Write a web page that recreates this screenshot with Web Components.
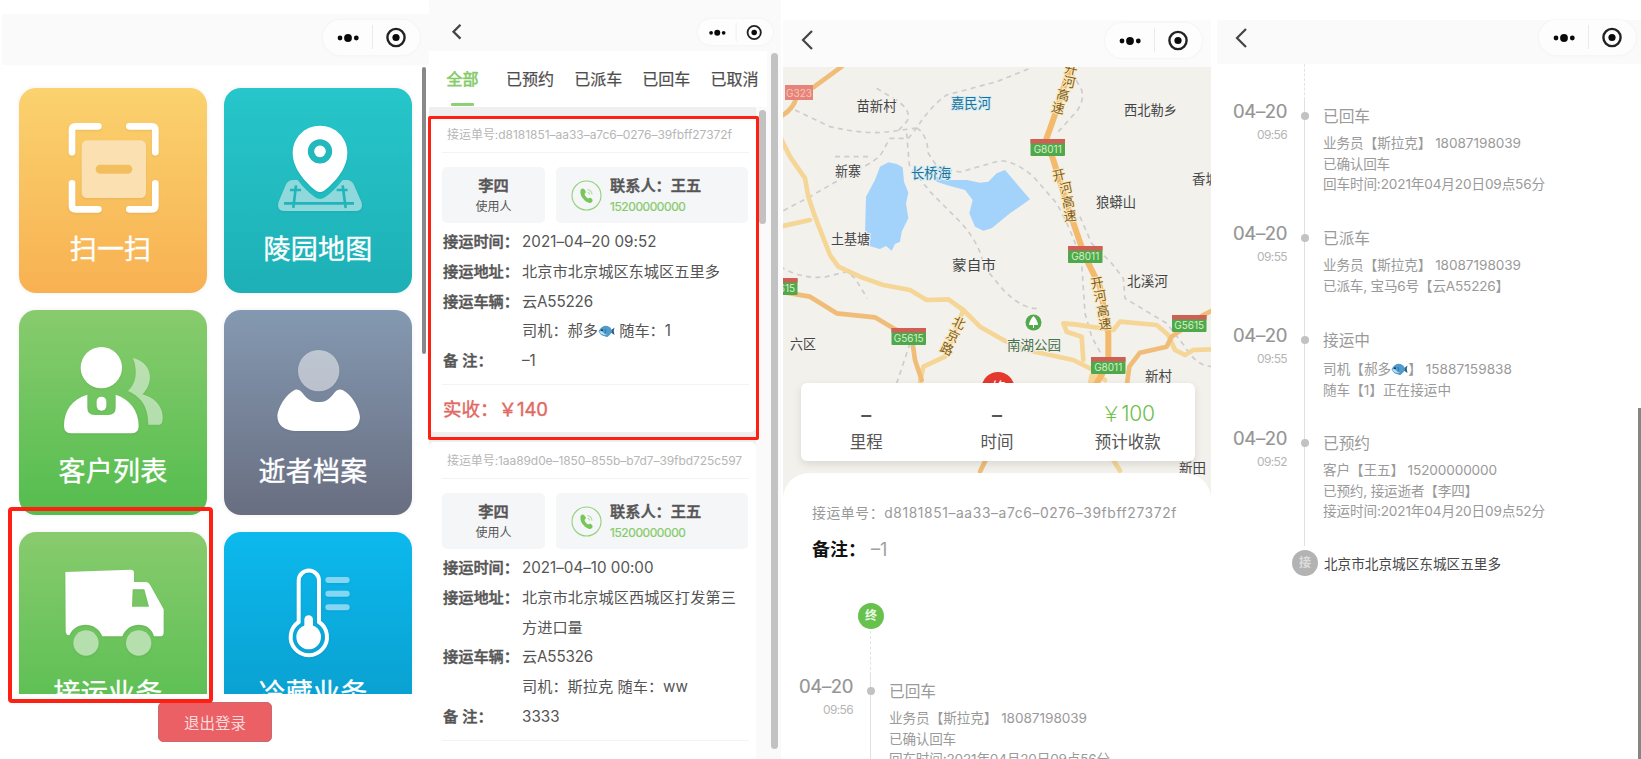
<!DOCTYPE html>
<html lang="zh-CN">
<head>
<meta charset="utf-8">
<title>接运业务</title>
<style>
html,body{margin:0;height:759px;overflow:hidden;background:#fff}
body{font-family:Inter,"Noto Sans CJK SC",sans-serif;color:#555}
</style>
</head>
<body>
<app-board></app-board>
<script>
const define = (name, html, init) => customElements.define(name, class extends HTMLElement {
  connectedCallback() {
    if (this.shadowRoot) return;
    this.attachShadow({ mode: 'open' }).innerHTML = typeof html === 'function' ? html(this) : html;
    if (init) init(this);
  }
});

/* Overall board: four phone screens side by side */
define('app-board', `
<style>
:host{display:flex;position:relative;width:1641px;height:759px;overflow:hidden}
home-screen{flex:0 0 429px}
list-screen{flex:0 0 352px}
detail-screen{flex:0 0 430px}
track-screen{flex:1}
.mark{position:absolute;box-sizing:border-box;border:solid #fe2012}
.m1{left:8px;top:507px;width:205px;height:196px;border-width:4.5px;border-radius:4px}
.m2{left:428px;top:116px;width:331px;height:324px;border-width:3px;border-radius:2px}
</style>
<home-screen></home-screen><list-screen></list-screen><detail-screen></detail-screen><track-screen></track-screen>
<div class="mark m1"></div><div class="mark m2"></div>`);

/* Title bar with optional back arrow and mini-program capsule */
define('nav-bar', el => {
  const s = +(el.getAttribute('scale') || 1);
  return `
<style>
:host{display:flex;align-items:center;justify-content:space-between;box-sizing:border-box;background:#fafafa}
svg{display:block;overflow:visible}
.caps{border-radius:20px;background:#fdfdfd;box-shadow:0 0 3px #eee}
</style>
${el.hasAttribute('back') ? `<svg width="${12*s}" height="${20*s}" viewBox="0 0 12 20" fill="none" stroke="#444" stroke-width="${s<1?3:2.2}"><path d="M11 1L2 10l9 9"/></svg>` : '<span></span>'}
<svg class="caps" width="${97*s}" height="${35*s}" viewBox="0 0 97 35"><g fill="#0a0a0a"><circle cx="17" cy="18" r="2.4"/><circle cx="25" cy="18" r="3.9"/><circle cx="33.3" cy="18" r="2.4"/><circle cx="73" cy="17.5" r="3.6"/></g><path d="M49.5 5v24" stroke="#eaeaea"/><circle cx="73" cy="17.5" r="8.6" fill="none" stroke="#222" stroke-width="2.4"/></svg>`;
});

/* ---------- Home ---------- */
define('menu-card', el => `
<style>
:host{display:block;width:188px;height:205px;border-radius:17px;box-shadow:0 0 5px #00000012}
svg{display:block;width:188px;height:133.3px}
.l{margin-top:8.500px;height:40px;line-height:40px;text-align:center;font-size:27px;color:#fff;-webkit-text-stroke:.35px #fff;letter-spacing:.2px;padding-right:${el.getAttribute('shift') || 0}px}
</style>
<slot></slot><div class="l">${el.getAttribute('label')}</div>`,
el => el.style.background = `linear-gradient(${el.getAttribute('from')},${el.getAttribute('to')})`);

define('home-screen', `
<style>
:host{display:flex;flex-direction:column;box-sizing:border-box;padding-top:14px}
nav-bar{height:51px;margin-left:2px;padding:0 9px 5px 0}
.body{display:flex;height:629px;justify-content:space-between;padding:0 3px 0 19px;overflow:hidden;box-sizing:border-box}
.grid{display:grid;grid-template-columns:188px 188px;grid-auto-rows:205px;gap:17.2px 17px;padding-top:23px}
.bar{width:4px;height:287px;margin-top:2px;border-radius:2px;background:#888}
svg{display:block;width:188px;height:133.3px;filter:drop-shadow(0 1px 1px #0001)}
.foot{display:flex;justify-content:center;padding-top:8px}
button{width:114px;height:40px;margin-left:1px;border:1px solid #c96a70;border-radius:5px;background:#ea6065;color:#fbd9d9;font:15.5px Inter,"Noto Sans CJK SC",sans-serif;padding:0}
</style>
<nav-bar></nav-bar>
<div class="body"><div class="grid">
<menu-card label="扫一扫" shift="5" from="#fad26e" to="#f8b152"><svg viewBox="57 264 564 400"><path d="M216 457v-67q0-11 11-11h68M388 379h67q11 0 11 11v67M216 550v67q0 11 11 11h68M388 628h67q11 0 11-11v-67" fill="none" stroke="#fff" stroke-width="20" stroke-linecap="round"/><rect x="245" y="421" width="193" height="173" rx="16" fill="#fbe0b2"/><rect x="287" y="494" width="110" height="27" rx="13" fill="#f3bf5e"/></svg></menu-card>
<menu-card label="陵园地图" from="#26c6ca" to="#1db0b6"><svg viewBox="672 264 564 400"><path d="M880 540Q864 540 857 555L836 605Q828 633 855 633H1065Q1092 633 1084 605L1062 555Q1055 540 1040 540H1028Q1000 575 975 592Q960 602 945 592Q915 570 893 540z" fill="#8fd8dc"/><path d="M852 610H1062M888 556L880 624M870 570H903M1028 556L1037 624M1010 570H1043" stroke="#22b4bb" stroke-width="8"/><path d="M960 377c-46 0-82 36-82 82 0 50 45 95 70 113q12 8 24 0c25-18 70-63 70-113 0-46-36-82-82-82z" fill="#fff"/><circle cx="960" cy="454" r="27" fill="none" stroke="#22b8bd" stroke-width="19"/></svg></menu-card>
<menu-card label="客户列表" from="#88cb6e" to="#54bd4e"><svg viewBox="57 62 564 400"><g fill="#fff"><circle cx="304" cy="235" r="62"/><path d="M262 316C215 330 192 365 192 410Q192 432 212 432H396Q416 432 416 410C416 365 390 330 347 316V355Q347 377 325 377H284Q262 377 262 355z"/><rect x="290" y="322" width="29" height="42" rx="14"/><path d="M399 206C455 220 465 275 427 315C480 330 492 370 487 395Q486 406 476 406H445C445 360 430 325 384 305C412 280 412 240 399 206z" opacity=".5"/></g></svg></menu-card>
<menu-card label="逝者档案" shift="10" from="#8499b1" to="#696e81"><svg viewBox="672 62 564 400"><g fill="#fff"><circle cx="956" cy="244" r="62" opacity=".5"/><path d="M885 301Q897 298 905 308C925 336 940 338 956 338C975 338 985 335 1005 308Q1012 298 1025 301C1055 312 1080 360 1080 385Q1075 425 1030 425H885Q832 422 832 378C835 355 855 315 885 301z"/></g></svg></menu-card>
<menu-card label="接运业务" shift="10" from="#88cb6e" to="#54bd4e"><svg viewBox="57 98 564 400"><path d="M196 218L392 211Q402 211 402 221V248H438Q446 248 450 256L491 330V400Q491 411 480 411H462C450 365 385 365 367 411H307C290 365 225 365 208 408Q197 408 197 395zM398 270L396 322H447L433 270z" fill="#fff"/><g fill="#b5dfad"><circle cx="258" cy="431" r="38"/><circle cx="416" cy="431" r="38"/></g></svg></menu-card>
<menu-card label="冷藏业务" shift="10" from="#0cb9ed" to="#099bcb"><svg viewBox="672 98 564 400"><path d="M896 368V244a30.500 30.500 0 0 1 61 0V368A54.500 54.500 0 1 1 896 368z" fill="none" stroke="#fff" stroke-width="12"/><g fill="#fff"><circle cx="926" cy="413" r="37"/><rect x="913" y="348" width="26" height="60" rx="13"/></g><g fill="#85d6f2"><rect x="976" y="233" width="73" height="18" rx="9"/><rect x="976" y="274" width="73" height="18" rx="9"/><rect x="976" y="315" width="73" height="18" rx="9"/></g></svg></menu-card>
</div><div class="bar"></div></div>
<div class="foot"><button>退出登录</button></div>`);

/* ---------- Order list ---------- */
define('fish-icon', `
<style>:host{display:inline-block;width:17px;height:13px;vertical-align:-1.500px}svg{display:block;width:100%;height:100%}</style>
<svg viewBox="0 0 34 25" preserveAspectRatio="none"><path d="M25 11l8-6q-3 6 0 14l-8-5z" fill="#2d5f86"/><path d="M10 3Q17-1 22 5zM14 21q5 4 8-2z" fill="#37739c"/><path d="M1 12Q7 1 17 2q9 1 11 10-3 9-12 10Q6 22 1 12z" fill="#4f9bcb"/><path d="M2 13Q8 10 10 14t8 4Q8 22 2 13z" fill="#b9dff0"/><circle cx="8" cy="10" r="1.800" fill="#123"/><path d="M14 8q3 4 0 8" stroke="#2f6c97" fill="none" stroke-width="1.500"/></svg>`);

define('field-row', el => `
<style>
:host{display:flex;height:29.7px;line-height:29.7px;font-size:15.2px;color:#555;padding-left:1px}
b{flex:0 0 79px;font-weight:500;-webkit-text-stroke:.45px #555}
</style>
<b>${el.getAttribute('label') || ''}</b><span><slot></slot></span>`);

define('order-card', el => `
<style>
:host{display:block;box-sizing:border-box;background:#fff;border-radius:5px;padding:0 7px 0 13px}
.id{height:36px;line-height:37px;padding-left:5px;font-size:12px;color:#b6b6b6;border-bottom:1px solid #f3f3f3}
.who{display:flex;gap:11px;margin:14px 0 4.400px}
.box{height:56px;border-radius:5px;background:#f5f6f8;box-sizing:border-box;padding-top:8px;line-height:21px;font-size:15.2px}
.u{width:103px;text-align:center}
.c{width:192px;display:flex;padding-left:15px}
.c svg{width:31px;height:31px;margin:5px 8px 0 0}
b{font-weight:500;-webkit-text-stroke:.5px #555}
small{display:block;font-size:12px;line-height:22px}
.c small{color:#85cb69;-webkit-text-stroke:.2px #85cb69}
.pay{border-top:1px solid #f3f3f3;margin-top:8.600px;padding-left:1px;height:46px;line-height:48px;font-size:18.5px;color:#df6a64;-webkit-text-stroke:.4px #df6a64}
</style>
<div class="id"><fit-text w="${el.getAttribute('idw')}">接运单号:${el.getAttribute('oid')}</fit-text></div>
<div class="who"><div class="box u"><b>李四</b><small>使用人</small></div>
<div class="box c"><svg viewBox="0 0 31 31"><circle cx="15.500" cy="15.500" r="14.500" fill="none" stroke="#93d27b" stroke-width="1.100"/><path d="M9.500 10q2-2.500 3.800-.8l1.500 2.400q.4 1.200-1.400 2.400 1 3 3.800 4.500 1.600-1.400 2.800-.4l1.500 1.700q.8 1.600-1.500 2.900-2.700.9-6-1.900-5.500-5-4.500-10.800z" fill="#76c757"/><path d="M16.500 9.500q4 .8 4.600 5M16.800 12.200q1.600.4 2 2.300" fill="none" stroke="#a9dc96" stroke-width="1.100"/></svg><div><b>联系人：王五</b><small><fit-text w="75.500">15200000000</fit-text></small></div></div></div>
<slot></slot>
<div class="pay">${el.hasAttribute('paid') ? `<fit-text w="105">实收：￥${el.getAttribute('paid')}</fit-text>` : ''}</div>`);

define('list-screen', `
<style>
:host{display:flex;flex-direction:column;background:#fafafa;overflow:hidden}
nav-bar{height:51px;padding:13px 8px 0 22.500px}
.wrap{display:flex;height:708px}
.main{width:338px;background:#fff}
.tabs{display:flex;height:56px;padding:0 8.500px 0 17.500px;box-sizing:border-box;justify-content:space-between;font-size:16px;line-height:57px;color:#4e4e4e;-webkit-text-stroke:.2px #4e4e4e}
.tabs .on{color:#86cb6a;-webkit-text-stroke:.6px #86cb6a;display:flex;flex-direction:column;align-items:center;margin-right:7.500px}
.on i{display:block;width:23px;height:3px;border-radius:1px;background:#8fcf76;margin-top:-5px}
.sc{display:flex;background:#efefef}
.cards{width:327px;padding-top:9px;display:flex;flex-direction:column;gap:10px}
.in{width:11px;height:652px;background:#fafafa;box-sizing:border-box;padding:3px 0 0 3px}
.in i,.out i{display:block;width:7px;border-radius:4px;background:#c2c2c2}
.in i{height:114px}
.out{padding:2px 0 0 4px}.out i{height:696px}
order-card:first-child{height:316px}
</style>
<nav-bar back scale=".77"></nav-bar>
<div class="wrap"><div class="main">
<div class="tabs"><span class="on">全部<i></i></span><span>已预约</span><span>已派车</span><span>已回车</span><span>已取消</span></div>
<div class="sc"><div class="cards">
<order-card oid="d8181851–aa33–a7c6–0276–39fbff27372f" idw="285" paid="140">
<field-row label="接运时间："><fit-text w="134.500">2021–04–20 09:52</fit-text></field-row>
<field-row label="接运地址："><fit-text w="198">北京市北京城区东城区五里多</fit-text></field-row>
<field-row label="接运车辆："><fit-text w="71">云A55226</fit-text></field-row>
<field-row>司机：郝多<fish-icon></fish-icon> 随车：1</field-row>
<field-row label="备 注：">–1</field-row></order-card>
<order-card oid="1aa89d0e–1850–855b–b7d7–39fbd725c597" idw="295">
<field-row label="接运时间："><fit-text w="131.500">2021–04–10 00:00</fit-text></field-row>
<field-row label="接运地址："><fit-text w="214">北京市北京城区西城区打发第三</fit-text></field-row>
<field-row>方进口量</field-row>
<field-row label="接运车辆："><fit-text w="71">云A55326</fit-text></field-row>
<field-row><fit-text w="166">司机：斯拉克 随车：ww</fit-text></field-row>
<field-row label="备 注：">3333</field-row></order-card>
</div><div class="in"><i></i></div></div>
</div><div class="out"><i></i></div></div>`);

/* ---------- Trip detail ---------- */
const along = (pts, s) => [...s].map((c, i) => `<text class="rd" transform="translate(${pts[i][0]} ${pts[i][1]}) rotate(${pts[i][2]})" text-anchor="middle" dy="4.700">${c}</text>`).join('');
const label = (x, y, w, t, cls = '') => `<text x="${x}" y="${y + 4.9}" textLength="${w}" lengthAdjust="spacingAndGlyphs" class="${cls}">${t}</text>`;
const shield = (x, y, t) => `<g transform="translate(${x} ${y})"><rect width="34.500" height="17" rx="1" fill="#4fa94c"/><path d="M0 0h34.500v4.500H0z" fill="#cf5f55"/><text x="17.200" y="14.200" text-anchor="middle" class="sh">${t}</text></g>`;

define('trip-map', `
<style>
:host{display:block}
svg{display:block}
text{font:13.3px "Noto Sans CJK SC",sans-serif;fill:#444;stroke:#f3f2ee;stroke-width:2px;paint-order:stroke}
text.w{fill:#1d7298;stroke:#d4ecf6}
text.g{fill:#47704d}
text.rd{font-size:13px;fill:#7d5a22;stroke:#fbe9bb}
text.sh{font:10px Inter,sans-serif;fill:#d8f0c8;stroke:none}
</style>
<svg width="428" height="440" viewBox="783 67 428 440">
<rect x="783" y="67" width="428" height="440" fill="#f2f1ec"/>
<g transform="translate(780 0) scale(.33333)" fill="none" stroke-linejoin="round" stroke-linecap="round">
<g fill="#a3d2fb"><path d="M325 487L350 492L368 502L372 545L385 578L378 610L385 655L365 695L360 725L345 732L335 752L318 738L300 747L268 738L255 700L258 590L285 540L300 500z"/><path d="M465 528L490 540L560 540L600 548L625 545L650 520L675 510L750 598L690 640L635 685L610 692L585 680L568 640L578 600L555 570L500 555L470 545z"/></g>
<g stroke="#cecccf" stroke-width="5" stroke-dasharray="15 13" stroke-linecap="butt">
<path d="M45 330L150 380Q260 405 330 395L410 384Q450 320 500 285L650 245L750 205"/><path d="M290 265L340 295Q400 330 380 365L355 392"/><path d="M10 632L90 590L220 515Q300 480 310 450L330 415L385 415L410 384"/><path d="M165 470L270 470"/><path d="M380 400L388 495L450 575L540 665Q600 730 612 800L670 870Q730 930 775 925"/><path d="M410 384Q440 400 445 460L475 505L540 516L660 482Q710 485 760 530L830 610Q880 700 905 790L915 940L935 1010L965 1065"/><path d="M835 395L880 345Q915 310 905 270L880 225"/><path d="M900 650L935 730L995 790L1030 835L1035 895L1160 970L1215 1040Q1250 1100 1300 1100"/><path d="M0 800Q70 840 140 830L200 815L225 835L262 895"/><path d="M390 1030L350 1150"/></g>
<g stroke="#f5d696" stroke-width="14"><path d="M0 410L30 470L75 535L85 590L105 650L150 765L175 800L245 832L310 855L390 870L440 900L505 898L550 930L600 980L670 1020L740 1050L880 1080L940 1110L975 1140"/><path d="M0 680L90 660"/><path d="M860 995L850 970L885 973L1000 990L1020 965L1130 975L1165 1005L1185 1050L1215 1065L1240 1050L1300 1048"/><path d="M860 995L905 1010L910 1080"/><path d="M550 930L495 1070L430 1100L420 1145"/><path d="M1000 1380L1020 1412"/><path d="M940 1130L935 1160" stroke-width="26"/></g>
<g stroke="#f0bd78" stroke-width="14"><path d="M185 200L100 262L50 290Q40 330 0 350"/><path d="M0 875L90 890L170 940L285 952L340 985L395 1010L405 1080L425 1140"/><path d="M1310 925L1270 945L1175 1010L1160 1040L1080 1058L1048 1100L1040 1160"/><path d="M617 1380L600 1415"/></g>
<g stroke="#f4ba6c" stroke-width="18"><path d="M872 195L830 330L798 420L820 480L870 640L915 770L960 860L985 1000L985 1090L950 1150"/></g>
</g>
<g transform="translate(785 85)"><rect width="28" height="15" fill="#e5847b"/><text class="sh" x="14" y="11.500" text-anchor="middle" style="fill:#fbc5b5">G323</text></g>
${label(856.5,106,40,'苗新村')}${label(951,103,40,'嘉民河','w')}${label(1124,110,53,'西北勒乡')}${label(835,171,26,'新寨')}${label(911,173,40,'长桥海','w')}${label(1096,202,40,'狼蟒山')}${label(1192,179,27,'香城')}${label(831,239,39,'土基塘')}${label(952,265,44,'蒙自市')}${label(1127,281,41,'北溪河')}${label(790,344,26,'六区')}${label(1007,345,54,'南湖公园','g')}${label(1145,376,27,'新村')}${label(1179,468,27,'新田')}
${along([[1071,69,12],[1069,82,12],[1063,95,12],[1058,108,12]],'开河高速')}
${along([[1059,175,-12],[1066,188,-12],[1068,202,-10],[1070,216,-8]],'开河高速')}
${along([[1097,283,-10],[1100,296,-10],[1103,311,-8],[1105,324,-8]],'开河高速')}
${along([[959,323,25],[953,336,25],[947,349,25]],'北京路')}
${shield(1030.5,139,'G8011')}${shield(1068,246,'G8011')}${shield(1091,357,'G8011')}${shield(891.5,328,'G5615')}${shield(1172,315,'G5615')}${shield(763,278,'G5615')}
<circle cx="1033.500" cy="322.500" r="8" fill="#54a94d"/><path d="M1033.500 316q4 4 4.500 9h-4v3h-1v-3h-4q.500-5 4.500-9z" fill="#fff"/>
<circle cx="998" cy="388.500" r="16.500" fill="#e5392d"/><text x="999" y="393" text-anchor="middle" style="font-size:15px;fill:#fff;stroke:none">终</text>
</svg>`);

define('round-mark', `
<style>:host{display:flex;flex:none;align-items:center;justify-content:center;width:26px;height:26px;border-radius:50%;font-size:12px;font-weight:700;color:#eaf8e4;line-height:1}</style><slot></slot>`);

define('time-item', el => `
<style>
:host{display:grid;grid-template-columns:70px 35px 1fr;color:#9a9a9a;box-sizing:border-box}
.d{text-align:right;font-size:18.500px;line-height:24px;color:#959595;-webkit-text-stroke:.2px #959595;margin-top:-1px}
.d small{display:block;font-size:12px;line-height:24px;color:#b5b5b5;-webkit-text-stroke:0}
.l{display:flex;justify-content:center;position:relative}
.l::before{content:"";width:1.500px;background:#e0e0e0}
.l i{position:absolute;left:13.500px;top:12px;width:8px;height:8px;border-radius:50%;background:#c2c2c2}
.t{font-size:15.700px;line-height:24px;margin:5px 0 0 1px}
.x{font-size:13.600px;line-height:20.500px;margin:var(--gap,4px) 0 0 1px}
</style>
<div class="d"><fit-text w="54">04–20</fit-text><small><fit-text w="30">${el.getAttribute('time')}</fit-text></small></div>
<div class="l"><i></i></div>
<div><div class="t">${el.getAttribute('title-text')}</div><div class="x"><slot></slot></div></div>`);

define('detail-screen', `
<style>
:host{display:flex;flex-direction:column;box-sizing:border-box;padding:20px 0 0 2px;overflow:hidden}
nav-bar{height:47px;padding:0 9.500px 7px 18px;background:#fbfbfb}
.map{height:406px;position:relative;flex:none}
.sum{position:absolute;left:18px;top:316px;width:394px;height:78px;border-radius:6px;background:#fff;box-shadow:0 3px 8px #0000001c;display:grid;grid-template-columns:repeat(3,1fr);box-sizing:border-box;padding:18px 2px 0 0;text-align:center;font-size:16.500px;line-height:28px;color:#555}
.sum b{display:block;font-weight:500;font-size:20px;line-height:29px;height:27px}
.sum .p{font-weight:300;color:#6cc04a;font-size:21px;line-height:26px}
.sheet{position:relative;flex:none;height:286px;background:#fff;border-radius:26px 26px 0 0;display:flex;flex-direction:column}
.sheet>*{flex:none}
.no{margin:28px 0 0 29px;line-height:24px;font-size:13.800px;color:#999}
.rm{margin:10px 0 0 29px;font-size:18px;line-height:30px;color:#a0a0a0}
.rm b{color:#111}
round-mark{background:#66c24c;margin:38px 0 0 75px}
.dots{height:44px;margin:2px 0 0 87px;border-left:1.500px dashed #e2e2e2}
time-item{height:110px}
</style>
<nav-bar back></nav-bar>
<div class="map"><trip-map></trip-map>
<div class="sum"><div><b>–</b>里程</div><div><b>–</b>时间</div><div><b class="p"><fit-text w="54">￥100</fit-text></b>预计收款</div></div></div>
<div class="sheet"><div class="no"><fit-text w="365">接运单号：d8181851–aa33–a7c6–0276–39fbff27372f</fit-text></div>
<div class="rm"><b>备注：</b> –1</div>
<round-mark>终</round-mark><div class="dots"></div>
<time-item time="09:56" title-text="已回车"><fit-text w="198">业务员【斯拉克】 18087198039</fit-text><br><fit-text w="67">已确认回车</fit-text><br><fit-text w="221">回车时间:2021年04月20日09点56分</fit-text></time-item></div>`);

/* ---------- Trip tracking ---------- */
define('track-screen', `
<style>
:host{display:flex;flex-direction:column;box-sizing:border-box;padding:20px 0 0 6px;overflow:hidden}
nav-bar{height:44px;padding:0 5px 9px 18px}
.b{display:flex;justify-content:space-between}
.dots{height:36px;margin-left:87px;border-left:1.500px dashed #e4e4e4}
.e{display:flex;align-items:center;gap:6px;margin:4px 0 0 75px;font-size:13.600px;color:#484848}
round-mark{background:#b3b3b3;color:#ddd}
.bar{width:3px;height:351px;margin-top:344px;background:#868686}
</style>
<nav-bar back></nav-bar>
<div class="b"><div><div class="dots"></div>
<time-item style="height:122px" time="09:56" title-text="已回车"><fit-text w="198">业务员【斯拉克】 18087198039</fit-text><br><fit-text w="67">已确认回车</fit-text><br><fit-text w="222">回车时间:2021年04月20日09点56分</fit-text></time-item>
<time-item style="height:102px" time="09:55" title-text="已派车"><fit-text w="198">业务员【斯拉克】 18087198039</fit-text><br><fit-text w="186">已派车, 宝马6号【云A55226】</fit-text></time-item>
<time-item style="height:103px;--gap:6px" time="09:55" title-text="接运中"><fit-text w="189">司机【郝多<fish-icon></fish-icon>】 15887159838</fit-text><br><fit-text w="128">随车【1】正在接运中</fit-text></time-item>
<time-item style="height:119px" time="09:52" title-text="已预约"><fit-text w="174">客户【王五】 15200000000</fit-text><br><fit-text w="155">已预约, 接运逝者【李四】</fit-text><br><fit-text w="222">接运时间:2021年04月20日09点52分</fit-text></time-item>
<div class="e"><round-mark>接</round-mark><fit-text w="177">北京市北京城区东城区五里多</fit-text></div></div>
<div class="bar"></div></div>`);

/* Single-line text tracked to a given width */
define('fit-text', '<style>:host{display:inline-block;white-space:nowrap}</style><slot></slot>', el => {
  const w = +el.getAttribute('w'), n = [...el.textContent].length;
  el.style.letterSpacing = ((w - el.getBoundingClientRect().width) / n).toFixed(3) + 'px';
});
</script>
</body>
</html>
